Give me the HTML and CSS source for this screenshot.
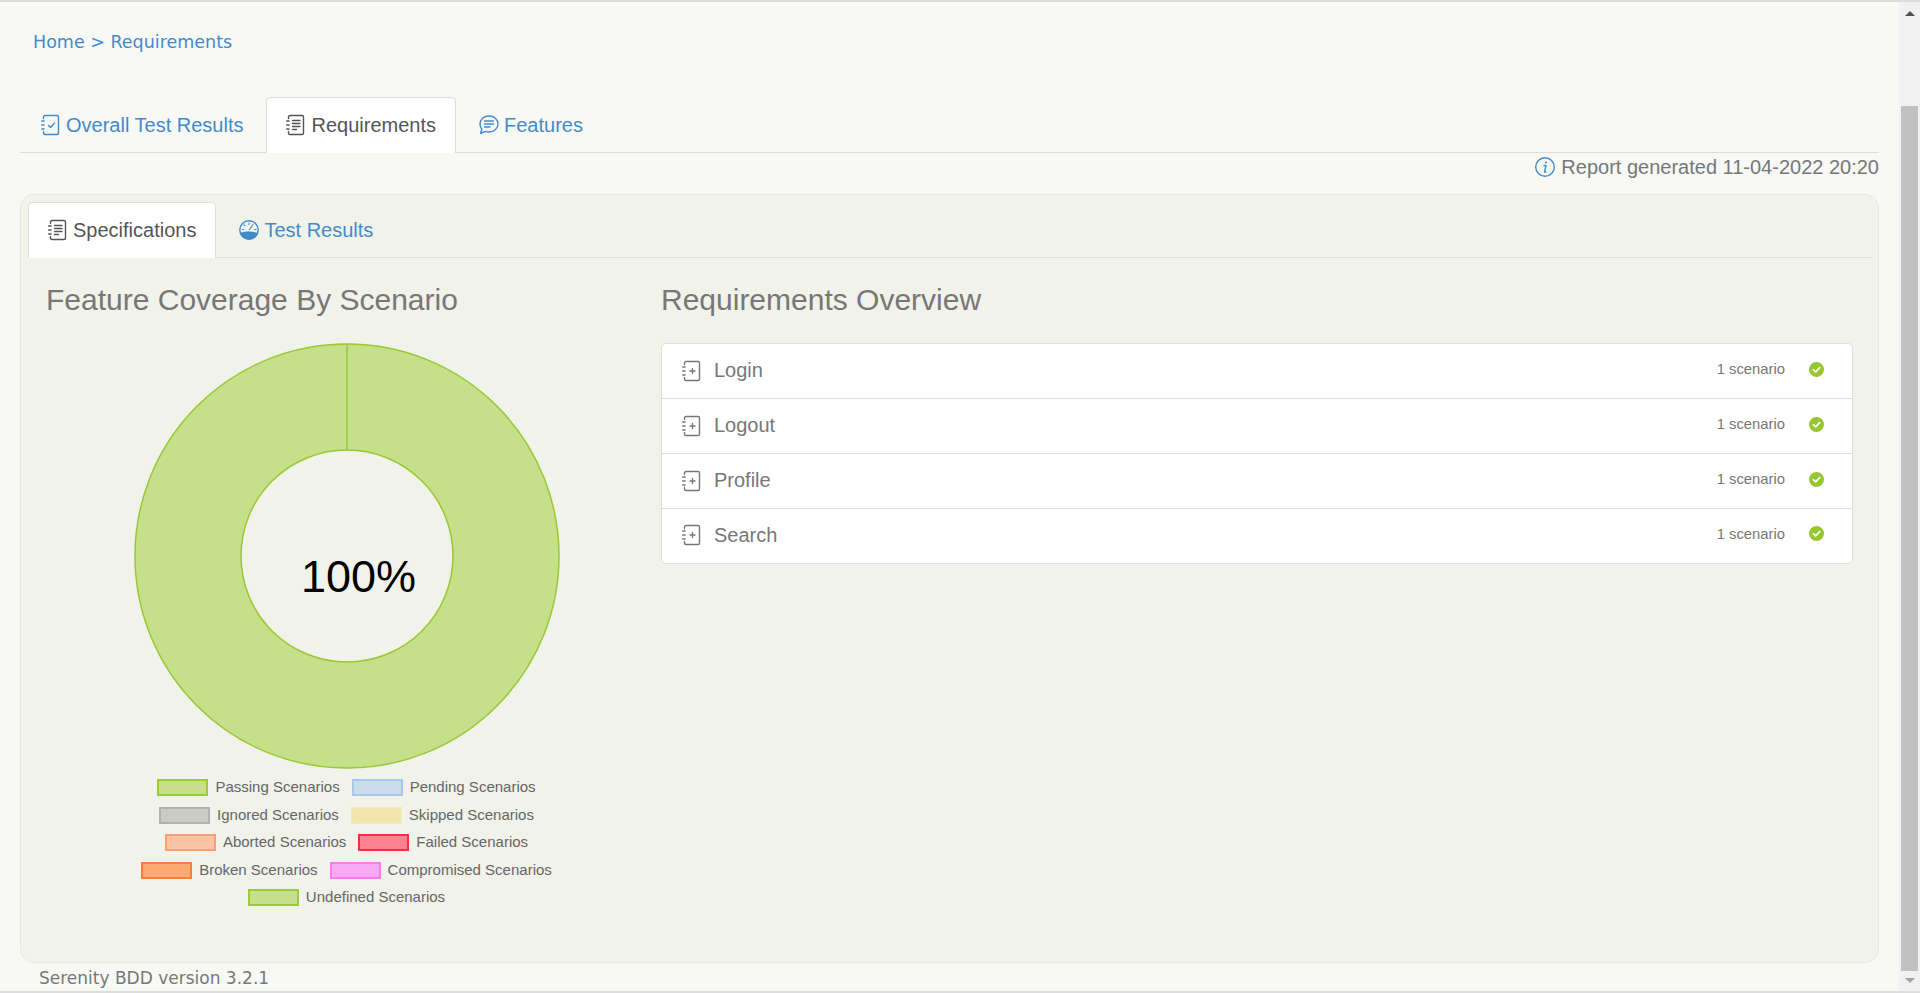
FILE: index.html
```html
<!DOCTYPE html>
<html lang="en">
<head>
<meta charset="utf-8">
<title>Requirements</title>
<link rel="stylesheet" href="styles.css">
</head>
<body>
<div class="app">
  <main class="main">
    <nav class="breadcrumb"><a>Home</a> &gt; <a>Requirements</a></nav>

    <ul class="tabs">
      <li class="tab">
        <svg class="ico-book" viewBox="0 0 18 20"><path class="s" d="M2.500 3.500V2A1.500 1.500 0 0 1 4 .5h12A1.500 1.500 0 0 1 17.500 2v16a1.500 1.500 0 0 1-1.500 1.500H4A1.500 1.500 0 0 1 2.500 18v-1.500"/><path class="s" d="M.7 6h2.400M.7 10h2.400M.7 14h2.400"/><path class="s" d="M7.500 10.500l2 2 4-4.500"/></svg>
        Overall Test Results
      </li>
      <li class="tab active">
        <svg class="ico-book" viewBox="0 0 18 20"><path class="s" d="M2.500 3.500V2A1.500 1.500 0 0 1 4 .5h12A1.500 1.500 0 0 1 17.500 2v16a1.500 1.500 0 0 1-1.500 1.500H4A1.500 1.500 0 0 1 2.500 18v-1.500"/><path class="s" d="M.7 6h2.400M.7 10h2.400M.7 14h2.400"/><path class="s" d="M6.500 5.500h7.500M6.500 8.500h7.500M6.500 11.500h7.500M6.500 14.500h4"/></svg>
        Requirements
      </li>
      <li class="tab">
        <svg class="ico-wide" viewBox="0 0 20 20"><path class="s" d="M10 1c5 0 9 3.500 9 8s-4 8-9 8c-1.300 0-2.600-.2-3.700-.6L1.500 18.500l1.400-4.300C1.700 12.800 1 11 1 9c0-4.500 4-8 9-8z"/><path class="s" d="M5.500 6h9M5.500 9h9M5.500 12h5.500"/></svg>
        Features
      </li>
    </ul>

    <div class="generated">
      <svg class="ico-wide info" viewBox="0 0 20 20"><circle class="s" cx="10" cy="10" r="9.300"/><path class="s" d="M9 8.500h2L9.500 15h1.500"/><circle class="dot" cx="11" cy="5.500" r="1.100"/></svg>
      <span>Report generated 11-04-2022 20:20</span>
    </div>

    <section class="panel">
      <ul class="tabs inner">
        <li class="tab active">
          <svg class="ico-book" viewBox="0 0 18 20"><path class="s" d="M2.500 3.500V2A1.500 1.500 0 0 1 4 .5h12A1.500 1.500 0 0 1 17.500 2v16a1.500 1.500 0 0 1-1.500 1.500H4A1.500 1.500 0 0 1 2.500 18v-1.500"/><path class="s" d="M.7 6h2.400M.7 10h2.400M.7 14h2.400"/><path class="s" d="M6.500 5.500h7.500M6.500 8.500h7.500M6.500 11.500h7.500M6.500 14.500h4"/></svg>
          Specifications
        </li>
        <li class="tab">
          <svg class="ico-wide" viewBox="0 0 20 20"><circle class="s" cx="10" cy="10" r="9.200"/><path class="f" d="M1.200 13c2.400-.9 5.300-1.400 8.800-1.400s6.400.5 8.800 1.400A9.300 9.300 0 0 1 10 19.400 9.300 9.300 0 0 1 1.200 13z"/><path class="needle" d="M10.500 9.500l3.500-5M10 3v1.500M5 4.800l1 1M3.200 9.500h1.500M15.500 9.500H17"/></svg>
          Test Results
        </li>
      </ul>

      <div class="columns">
        <div class="coverage">
          <h3 class="title">Feature Coverage By Scenario</h3>
          <div class="donut">
            <svg class="donut-svg" viewBox="0 0 426 426">
              <circle class="ring" cx="213" cy="213" r="159"/>
              <circle class="ring-edge" cx="213" cy="213" r="212"/>
              <circle class="ring-edge" cx="213" cy="213" r="106"/>
              <path class="ring-edge" d="M213 1v106"/>
            </svg>
            <span class="percent">100%</span>
          </div>
          <div class="legend">
            <div class="legend-row">
              <span class="item"><i class="sw passing"></i>Passing Scenarios</span>
              <span class="item"><i class="sw pending"></i>Pending Scenarios</span>
            </div>
            <div class="legend-row">
              <span class="item"><i class="sw ignored"></i>Ignored Scenarios</span>
              <span class="item"><i class="sw skipped"></i>Skipped Scenarios</span>
            </div>
            <div class="legend-row">
              <span class="item"><i class="sw aborted"></i>Aborted Scenarios</span>
              <span class="item"><i class="sw failed"></i>Failed Scenarios</span>
            </div>
            <div class="legend-row">
              <span class="item"><i class="sw broken"></i>Broken Scenarios</span>
              <span class="item"><i class="sw compromised"></i>Compromised Scenarios</span>
            </div>
            <div class="legend-row">
              <span class="item"><i class="sw passing"></i>Undefined Scenarios</span>
            </div>
          </div>
        </div>

        <div class="overview">
          <h3 class="title">Requirements Overview</h3>
          <ul class="list">
            <li class="row">
              <svg class="ico-book" viewBox="0 0 18 20"><path class="s" d="M2.500 3.500V2A1.500 1.500 0 0 1 4 .5h12A1.500 1.500 0 0 1 17.500 2v16a1.500 1.500 0 0 1-1.500 1.500H4A1.500 1.500 0 0 1 2.500 18v-1.500"/><path class="s" d="M.7 6h2.400M.7 10h2.400M.7 14h2.400"/><path class="s" d="M8 10h5M10.500 7.500v5"/></svg>
              <span class="name">Login</span>
              <span class="count">1 scenario</span>
              <svg class="check" viewBox="0 0 15 15"><circle class="check-bg" cx="7.500" cy="7.500" r="7.500"/><path class="check-mark" d="M4.300 7.700l2.300 2.200 4.100-4.300"/></svg>
            </li>
            <li class="row">
              <svg class="ico-book" viewBox="0 0 18 20"><path class="s" d="M2.500 3.500V2A1.500 1.500 0 0 1 4 .5h12A1.500 1.500 0 0 1 17.500 2v16a1.500 1.500 0 0 1-1.500 1.500H4A1.500 1.500 0 0 1 2.500 18v-1.500"/><path class="s" d="M.7 6h2.400M.7 10h2.400M.7 14h2.400"/><path class="s" d="M8 10h5M10.500 7.500v5"/></svg>
              <span class="name">Logout</span>
              <span class="count">1 scenario</span>
              <svg class="check" viewBox="0 0 15 15"><circle class="check-bg" cx="7.500" cy="7.500" r="7.500"/><path class="check-mark" d="M4.300 7.700l2.300 2.200 4.100-4.300"/></svg>
            </li>
            <li class="row">
              <svg class="ico-book" viewBox="0 0 18 20"><path class="s" d="M2.500 3.500V2A1.500 1.500 0 0 1 4 .5h12A1.500 1.500 0 0 1 17.500 2v16a1.500 1.500 0 0 1-1.500 1.500H4A1.500 1.500 0 0 1 2.500 18v-1.500"/><path class="s" d="M.7 6h2.400M.7 10h2.400M.7 14h2.400"/><path class="s" d="M8 10h5M10.500 7.500v5"/></svg>
              <span class="name">Profile</span>
              <span class="count">1 scenario</span>
              <svg class="check" viewBox="0 0 15 15"><circle class="check-bg" cx="7.500" cy="7.500" r="7.500"/><path class="check-mark" d="M4.300 7.700l2.300 2.200 4.100-4.300"/></svg>
            </li>
            <li class="row">
              <svg class="ico-book" viewBox="0 0 18 20"><path class="s" d="M2.500 3.500V2A1.500 1.500 0 0 1 4 .5h12A1.500 1.500 0 0 1 17.500 2v16a1.500 1.500 0 0 1-1.500 1.500H4A1.500 1.500 0 0 1 2.500 18v-1.500"/><path class="s" d="M.7 6h2.400M.7 10h2.400M.7 14h2.400"/><path class="s" d="M8 10h5M10.500 7.500v5"/></svg>
              <span class="name">Search</span>
              <span class="count">1 scenario</span>
              <svg class="check" viewBox="0 0 15 15"><circle class="check-bg" cx="7.500" cy="7.500" r="7.500"/><path class="check-mark" d="M4.300 7.700l2.300 2.200 4.100-4.300"/></svg>
            </li>
          </ul>
        </div>
      </div>
    </section>

    <footer class="footer">Serenity BDD version 3.2.1</footer>
  </main>

  <aside class="scrollbar">
    <div class="sb-up"><span class="arrow-up"></span></div>
    <div class="sb-thumb"></div>
    <div class="sb-down"><span class="arrow-down"></span></div>
  </aside>
</div>
</body>
</html>
```
FILE: styles.css
```css
* { box-sizing: border-box; }
html, body { margin: 0; padding: 0; height: 100%; overflow: hidden; }
body { font-family: "Liberation Sans", Arial, sans-serif; color: #777; background: #f8f9f5; }
ul { list-style: none; margin: 0; padding: 0; }

.app {
  display: flex;
  height: 993px;
  border-top: 2px solid #ddd;
  border-bottom: 2px solid #ddd;
}
.main { flex: 1; min-width: 0; padding: 0 20px; display: flex; flex-direction: column; }

.breadcrumb {
  margin: 30px 0 0 13px;
  height: 20px;
  font: 17.500px/20px "DejaVu Sans", sans-serif;
  color: #428bca;
}

.tabs {
  display: flex;
  gap: 3px;
  height: 56px;
  margin-top: 45px;
  padding-left: 1px;
  border-bottom: 1px solid #ddd;
  flex: none;
}
.tab {
  display: flex;
  align-items: center;
  height: 56px;
  padding: 0 19px 1px;
  border: 1px solid transparent;
  border-bottom: 0;
  border-radius: 5px 5px 0 0;
  font-size: 20px;
  color: #428bca;
}
.tab.active { background: #fff; border-color: #ddd; color: #555; }
.tabs.inner { margin-top: 0; padding-left: 0; }

.ico-book { width: 18px; height: 20px; flex: none; margin-right: 7px; overflow: visible; }
.ico-wide { width: 20px; height: 20px; flex: none; margin-right: 5px; overflow: visible; }
.s { fill: none; stroke: currentColor; stroke-width: 1.400; stroke-linecap: round; stroke-linejoin: round; }
.needle { fill: none; stroke: currentColor; stroke-width: 1.100; stroke-linecap: round; }
.f { fill: currentColor; }
.dot { fill: currentColor; }

.generated {
  display: flex;
  justify-content: flex-end;
  align-items: center;
  height: 28px;
  margin-bottom: 13px;
  font-size: 20px;
  flex: none;
}
.generated .ico-wide { margin-right: 6px; }
.info { color: #428bca; }

.panel {
  height: 769px;
  flex: none;
  padding: 7px 6px 0 7px;
  background: #f1f2ea;
  border: 1px solid #e7e8e0;
  border-radius: 14px;
}

.columns { display: flex; gap: 14px; padding: 24px 19px 0 18px; }
.coverage { width: 601px; flex: none; }
.overview { flex: 1; min-width: 0; }
.title { margin: 0 0 25px; font-size: 30px; line-height: 36px; font-weight: 400; color: #777; }

.donut { position: relative; height: 426px; display: flex; justify-content: center; }
.donut-svg { width: 426px; height: 426px; display: block; }
.ring { fill: none; stroke: #c6df8b; stroke-width: 106; }
.ring-edge { fill: none; stroke: #99c832; stroke-width: 1.500; }
.percent {
  position: absolute;
  left: 255px;
  top: 205px;
  font-size: 45px;
  line-height: 58px;
  color: #000;
}

.legend { margin-top: 4px; }
.legend-row { display: flex; justify-content: center; gap: 12px; height: 27.500px; align-items: center; }
.item { display: flex; align-items: center; font-size: 15px; color: #666; white-space: nowrap; }
.sw { display: block; width: 51px; height: 17px; margin: 2px 7px 0 0; border: 2px solid; }
.passing { background: #c6df8b; border-color: #9ccb3a; }
.pending { background: #cadcec; border-color: #a7c7ec; }
.ignored { background: #cacac6; border-color: #b1b1ad; }
.skipped { background: #f0e6ad; border-color: #f2e9b2; }
.aborted { background: #fac3a5; border-color: #fc9f70; }
.failed { background: #fd818e; border-color: #f92c48; }
.broken { background: #fbaa76; border-color: #fb7d3a; }
.compromised { background: #f9a9f4; border-color: #fd7af5; }

.list { background: #fff; border: 1px solid #ddd; border-radius: 5px; margin-top: 0; }
.row {
  display: flex;
  align-items: center;
  height: 55px;
  padding: 0 28px 1px 20px;
  border-bottom: 1px solid #ddd;
}
.row:last-child { border-bottom: 0; height: 54px; padding-bottom: 2px; }
.row .ico-book { margin-right: 14px; color: #777; }
.name { font-size: 20px; color: #777; }
.count { margin: 0 24px 3px auto; font-size: 14.800px; color: #777; }
.check { width: 15px; height: 15px; flex: none; margin-bottom: 3px; }
.check-bg { fill: #95c72f; }
.check-mark { fill: none; stroke: #fff; stroke-width: 1.600; stroke-linecap: round; stroke-linejoin: round; }

.footer {
  padding: 5px 0 0 19px;
  font: 17px/20px "DejaVu Sans", sans-serif;
  color: #777;
}

.scrollbar { width: 21px; flex: none; display: flex; flex-direction: column; background: #f1f1f1; padding: 0 2px; }
.sb-up { height: 104px; flex: none; display: flex; justify-content: center; padding-top: 9px; }
.sb-thumb { height: 865px; flex: none; background: #c1c1c1; }
.sb-down { flex: 1; display: flex; justify-content: center; padding-top: 7px; }
.arrow-up { width: 0; height: 0; border: 5px solid transparent; border-top: 0; border-bottom-color: #505050; }
.arrow-down { width: 0; height: 0; border: 5px solid transparent; border-bottom: 0; border-top-color: #a3a3a3; }
```
